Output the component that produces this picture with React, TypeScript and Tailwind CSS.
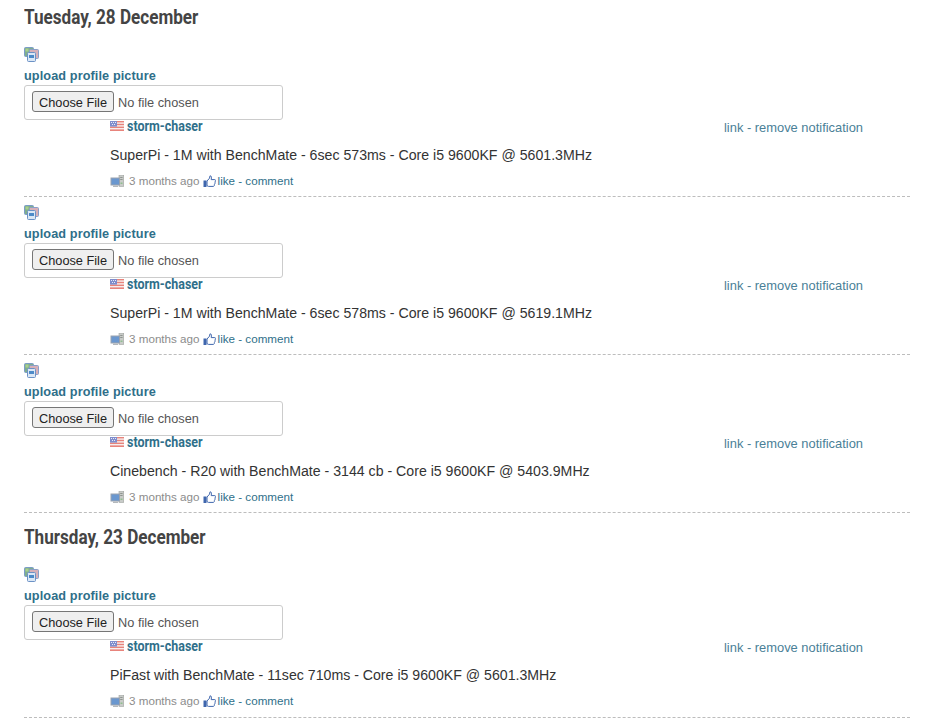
function StackIcon() {
  return (
    <svg width="15" height="15" viewBox="0 0 15 15" className="block">
      <rect x="0.5" y="0.5" width="9" height="9" rx="1" fill="#7fae8c" stroke="#7b9cc8" />
      <rect x="1.5" y="1.5" width="3" height="3" fill="#a9d08e" />
      <rect x="5.5" y="2.5" width="9" height="9" rx="1" fill="#d8b0b8" stroke="#8aa0c8" />
      <rect x="3.5" y="5.5" width="8" height="9" rx="1" fill="#dbe7f5" stroke="#6c92c6" />
      <rect x="5" y="8" width="5" height="3" fill="#4d8ac8" />
    </svg>
  );
}

function Flag() {
  return (
    <svg width="14" height="10" viewBox="0 0 14 10" className="block -mt-[1px]">
      <rect width="14" height="10" fill="#f6eeee" />
      <rect y="0" width="14" height="1.4" fill="#e8847c" />
      <rect y="2.8" width="14" height="1.4" fill="#e8847c" />
      <rect y="5.6" width="14" height="1.4" fill="#e8847c" />
      <rect y="8.4" width="14" height="1.6" fill="#e8847c" />
      <rect width="7" height="5.6" fill="#7f8dcc" />
      <rect x="1" y="1" width="1" height="1" fill="#e6e9f7" />
      <rect x="3" y="1" width="1" height="1" fill="#e6e9f7" />
      <rect x="5" y="1" width="1" height="1" fill="#e6e9f7" />
      <rect x="2" y="3" width="1" height="1" fill="#e6e9f7" />
      <rect x="4" y="3" width="1" height="1" fill="#e6e9f7" />
    </svg>
  );
}

function Computer() {
  return (
    <svg width="14" height="13" viewBox="0 0 14 13" className="block">
      <rect x="9" y="0.5" width="4.7" height="11" fill="#c8cbc8" stroke="#a0a4a0" strokeWidth="0.6" />
      <rect x="10.2" y="2" width="2.4" height="1" fill="#8f9490" />
      <rect x="10.2" y="4" width="2.4" height="1" fill="#8f9490" />
      <rect x="10.5" y="7.5" width="2" height="1.5" fill="#8fbf8f" />
      <rect x="0.5" y="2.5" width="9.5" height="8" fill="#9aa2ae" />
      <rect x="1.5" y="3.5" width="7.5" height="6" fill="#6a97cf" />
      <rect x="3" y="10.5" width="5" height="1.5" fill="#b4b8bc" />
    </svg>
  );
}

function Thumb() {
  return (
    <svg width="13" height="13" viewBox="0 0 13 13" className="block">
      <rect x="0.5" y="5.5" width="3" height="6.5" fill="#3f66ad" />
      <path d="M4 6 L6.5 3.2 L7 0.8 C8.3 0.7 8.7 2 8.2 4.6 L11.8 4.6 C12.6 4.6 12.6 5.7 12.2 6.1 C12.5 6.8 12.3 7.5 11.9 7.8 C12.1 8.5 11.9 9.2 11.4 9.5 C11.5 10.4 11.1 11.4 10.3 11.4 L5.5 11.4 L4 10.7 Z" fill="#fff" stroke="#3f66ad" strokeWidth="1" />
    </svg>
  );
}

function Item({ text, tall }: { text: string; tall?: boolean }) {
  return (
    <div className={tall ? "border-b border-dashed border-[#bdbdbd] h-[159px] flex flex-col" : "border-b border-dashed border-[#bdbdbd] h-[158px] flex flex-col"}>
      <div className="pt-[8px] h-[24px]"><StackIcon /></div>
      <div className="mt-[5px] h-[17px] text-[12.7px] leading-[17px] font-bold text-[#2f6f8a] tracking-[0.1px]">upload profile picture</div>
      <div className="w-[259px] h-[35px] border border-[#cccccc] rounded-[3px] px-[7px] pb-[2px] flex items-center">
        <input type="file" className="text-[12.75px] text-[#555555] font-['Liberation_Sans'] file:mr-[4px] file:text-[#222] file:bg-[#efefef] file:border file:border-solid file:border-[#767676] file:rounded-[3px] file:px-[6px] file:py-[1px] file:h-[21px]" />
      </div>
      <div className="flex justify-between pl-[86px] pr-[47px]">
        <div className="flex flex-col">
          <div className="flex items-center gap-[3px] h-[15px] -mt-[1px]">
            <Flag />
            <span className="inline-block origin-left scale-x-[0.89] text-[14px] leading-[15px] font-bold text-[#2f6f8a] font-['Roboto']">storm-chaser</span>
          </div>
          <div className="mt-[11px] h-[20px] text-[14.15px] leading-[20px] text-[#333333]">{text}</div>
          <div className="mt-[7px] h-[18px] flex items-center text-[11.65px] leading-[18px]">
            <Computer />
            <span className="ml-[5px] text-[#8c8c8c]">3 months ago</span>
            <span className="ml-[3px]"><Thumb /></span>
            <span className="ml-[2px] text-[#2f6f8a]">like - comment</span>
          </div>
        </div>
        <div className="text-[12.9px] leading-[18px] text-[#4a7f97] -mt-[1px]">link - remove notification</div>
      </div>
    </div>
  );
}

function DayHeading({ children, className }: { children: string; className?: string }) {
  return (
    <div className={className}>
      <h2 className="inline-block origin-left scale-x-[0.855] whitespace-nowrap text-[20px] leading-[24px] font-bold text-[#444444] font-['Roboto']">{children}</h2>
    </div>
  );
}

export default function App() {
  return (
    <div className="w-[925px] h-[720px] overflow-hidden bg-white pl-[24px] pr-[15px] font-['Liberation_Sans']">
      <DayHeading className="pt-[5px] h-[39px]">Tuesday, 28 December</DayHeading>
      <Item text="SuperPi - 1M with BenchMate - 6sec 573ms - Core i5 9600KF @ 5601.3MHz" />
      <Item text="SuperPi - 1M with BenchMate - 6sec 578ms - Core i5 9600KF @ 5619.1MHz" />
      <Item text="Cinebench - R20 with BenchMate - 3144 cb - Core i5 9600KF @ 5403.9MHz" />
      <DayHeading className="pt-[12px] h-[46px]">Thursday, 23 December</DayHeading>
      <Item tall text="PiFast with BenchMate - 11sec 710ms - Core i5 9600KF @ 5601.3MHz" />
    </div>
  );
}
